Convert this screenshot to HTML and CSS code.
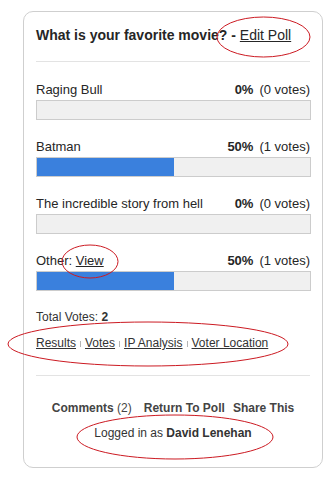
FILE: index.html
```html
<!DOCTYPE html>
<html>
<head>
<meta charset="utf-8">
<link rel="stylesheet" href="styles.css">
</head>
<body>
<div class="card">
  <div class="title"><b>What is your favorite movie? - </b><a href="#">Edit Poll</a></div>
  <div class="rule"></div>
  <div class="items">
    <div class="item">
      <div class="row"><span class="label">Raging Bull</span><span class="stat"><b>0%</b><span class="votes">(0 votes)</span></span></div>
      <div class="bar"><div class="fill" style="width:0%"></div></div>
    </div>
    <div class="item">
      <div class="row"><span class="label">Batman</span><span class="stat"><b>50%</b><span class="votes">(1 votes)</span></span></div>
      <div class="bar"><div class="fill" style="width:50%"></div></div>
    </div>
    <div class="item">
      <div class="row"><span class="label">The incredible story from hell</span><span class="stat"><b>0%</b><span class="votes">(0 votes)</span></span></div>
      <div class="bar"><div class="fill" style="width:0%"></div></div>
    </div>
    <div class="item">
      <div class="row"><span class="label">Other: <a href="#">View</a></span><span class="stat"><b>50%</b><span class="votes">(1 votes)</span></span></div>
      <div class="bar"><div class="fill" style="width:50%"></div></div>
    </div>
  </div>
  <div class="total">Total Votes: <b>2</b></div>
  <div class="links"><a href="#">Results</a><span class="sep"></span><a href="#">Votes</a><span class="sep"></span><a href="#">IP Analysis</a><span class="sep"></span><a href="#">Voter Location</a></div>
  <div class="rule rule2"></div>
  <div class="footer">
    <span class="flink first"><b>Comments</b> (2)</span>
    <span class="flink"><b>Return To Poll</b></span>
    <span class="flink"><b>Share This</b></span>
  </div>
  <div class="logged">Logged in as <b>David Lenehan</b></div>
</div>
<svg class="marks" width="336" height="482" viewBox="0 0 336 482">
  <ellipse cx="263.5" cy="37" rx="46.5" ry="20"/>
  <ellipse cx="90" cy="261.5" rx="28" ry="16.5"/>
  <ellipse cx="148" cy="344" rx="140" ry="22"/>
  <ellipse cx="175" cy="437" rx="98" ry="22"/>
</svg>
</body>
</html>
```
FILE: styles.css
```css
html, body {
  margin: 0;
  padding: 0;
  background: #fff;
}
body {
  font-family: "Liberation Sans", Arial, Helvetica, sans-serif;
  font-size: 13px;
  line-height: 16px;
  color: #262626;
  position: relative;
  width: 336px;
  height: 482px;
  overflow: hidden;
}
a {
  color: #262626;
  text-decoration: underline;
}
.card {
  margin: 11px 0 0 23px;
  width: 300px;
  box-sizing: border-box;
  border: 1px solid #cfcfcf;
  border-radius: 10px;
  padding: 15px 12px 26px 12px;
}
.title {
  height: 16px;
  font-size: 14px;
}
.rule {
  height: 1px;
  background: #e3e3e3;
  margin-top: 18px;
}
.items {
  display: flex;
  flex-direction: column;
  gap: 19px;
  margin-top: 20px;
}
.item {
  display: flex;
  flex-direction: column;
  gap: 2px;
}
.row {
  display: flex;
  justify-content: space-between;
  height: 16px;
}
.votes {
  margin-left: 6px;
}
.bar {
  height: 18px;
  border: 1px solid #cccccc;
  background: #f0f0f0;
  margin-right: -1px;
}
.fill {
  height: 100%;
  background: #3a80dd;
}
.total {
  margin-top: 18px;
  height: 16px;
  font-size: 12px;
  color: #333;
}
.links {
  margin-top: 10px;
  height: 16px;
  font-size: 12px;
  display: flex;
  align-items: center;
}
.links a {
  color: #333;
}
.sep {
  width: 1px;
  height: 6px;
  background: #b5b5b5;
  margin: 2px 4px 0 4px;
}
.rule2 {
  margin-top: 24px;
}
.footer {
  margin-top: 24px;
  display: flex;
  justify-content: center;
  gap: 8px;
  color: #444;
  height: 16px;
  font-size: 12px;
}
.footer .first {
  margin-right: 4px;
}
.logged {
  margin-top: 9px;
  text-align: center;
  color: #333;
  height: 16px;
  font-size: 12px;
}
.marks {
  position: absolute;
  left: 0;
  top: 0;
  pointer-events: none;
}
.marks ellipse {
  fill: none;
  stroke: #cc1a22;
  stroke-width: 1;
}
```
